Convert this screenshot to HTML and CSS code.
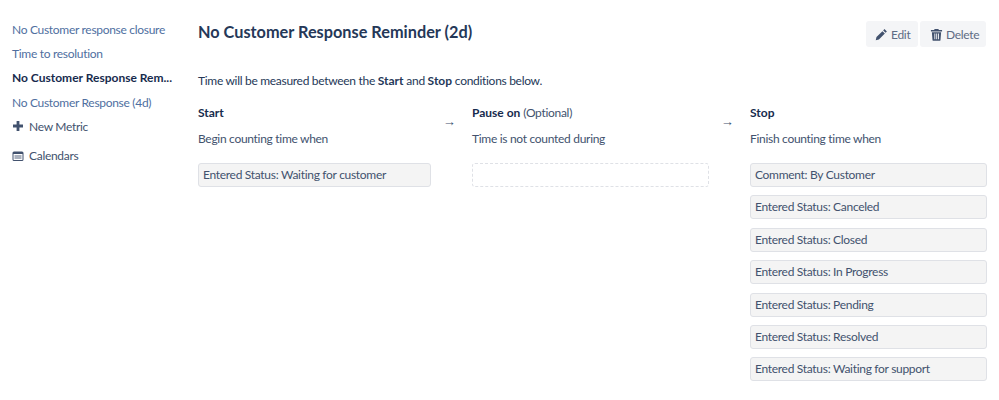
FILE: index.html
```html
<!DOCTYPE html>
<html lang="en">
<head>
<meta charset="utf-8">
<title>No Customer Response Reminder (2d)</title>
<link rel="stylesheet" href="styles.css">
</head>
<body>
<div class="page">
  <nav class="side">
    <a class="link">No Customer response closure</a>
    <a class="link">Time to resolution</a>
    <a class="link active">No Customer Response Rem...</a>
    <a class="link">No Customer Response (4d)</a>
    <a class="link action"><svg class="ico" viewBox="0 0 12 12"><path d="M4.600 1h2.800v3.600H11v2.800H7.400V11H4.600V7.400H1V4.600h3.600z"/></svg>New Metric</a>
    <a class="link action cal"><svg class="ico" viewBox="0 0 12 12"><path fill-rule="evenodd" d="M2 1.500h8A1.500 1.500 0 0 1 11.500 3v6.500A1.500 1.500 0 0 1 10 11H2A1.500 1.500 0 0 1 .5 9.500V3A1.500 1.500 0 0 1 2 1.500zM1.500 4v5.500a.5.5 0 0 0 .5.5h8a.5.5 0 0 0 .5-.5V4z"/><path opacity=".45" d="M2.500 5h7v4h-7z"/></svg>Calendars</a>
  </nav>
  <main class="main">
    <header class="head">
      <h1 class="title">No Customer Response Reminder (2d)</h1>
      <div class="btns">
        <button class="btn btn-edit"><svg class="bico" viewBox="0 0 14 14"><path d="M10.200 1.200l2.600 2.600-1.400 1.400-2.600-2.600zM8 3.400L10.600 6l-6.400 6.400-3.400.8.800-3.400z"/></svg>Edit</button>
        <button class="btn btn-del"><svg class="bico" viewBox="0 0 14 14"><path fill-rule="evenodd" d="M5 1h4l.6 1.200H13v1.500H1V2.200h3.400zM2 4.500h10l-.7 8.300a1 1 0 0 1-1 .9H3.700a1 1 0 0 1-1-.9zM4.700 6v6h1V6zm2 0v6h1V6zm2 0v6h1V6z"/></svg>Delete</button>
      </div>
    </header>
    <p class="intro">Time will be measured between the <b>Start</b> and <b>Stop</b> conditions below.</p>
    <div class="cols">
      <section class="col c1">
        <h2 class="ch">Start</h2>
        <p class="sub">Begin counting time when</p>
        <div class="item">Entered Status: Waiting for customer</div>
      </section>
      <div class="arrow">→</div>
      <section class="col c2">
        <h2 class="ch">Pause on <span class="opt">(Optional)</span></h2>
        <p class="sub">Time is not counted during</p>
        <div class="empty"></div>
      </section>
      <div class="arrow">→</div>
      <section class="col c3">
        <h2 class="ch">Stop</h2>
        <p class="sub">Finish counting time when</p>
        <div class="item">Comment: By Customer</div>
        <div class="item">Entered Status: Canceled</div>
        <div class="item">Entered Status: Closed</div>
        <div class="item">Entered Status: In Progress</div>
        <div class="item">Entered Status: Pending</div>
        <div class="item">Entered Status: Resolved</div>
        <div class="item">Entered Status: Waiting for support</div>
      </section>
    </div>
  </main>
</div>
</body>
</html>
```

FILE: styles.css
```css
* { box-sizing: border-box; }
html, body { margin: 0; background: #fff; }
body { font-family: Lato, "Open Sans", sans-serif; font-size: 12px; letter-spacing: -0.300px; color: #172b4d; height: 400px; overflow: hidden; }
b { letter-spacing: 0; }
.page { display: flex; padding-top: 17px; }
.side { flex: none; width: 198px; padding-left: 12px; display: flex; flex-direction: column; }
.link { display: flex; align-items: center; height: 24.300px; color: #4f6f9f; white-space: nowrap; }
.active { color: #172b4d; font-weight: 700; letter-spacing: 0; }
.action { color: #42526e; }
.cal { margin-top: 5px; }
.ico { width: 12px; height: 12px; margin-right: 5px; fill: #42526e; flex: none; }
.main { flex: none; width: 789px; padding-top: 1px; }
.head { display: flex; justify-content: space-between; align-items: flex-start; height: 54px; padding-right: 1px; }
.title { margin: 2px 0 0; font-size: 16.300px; font-weight: 700; letter-spacing: 0; line-height: 24px; color: #253858; }
.btns { display: flex; gap: 2px; margin-top: 3px; }
.btn { display: flex; align-items: center; height: 26px; border: 0; border-radius: 3px; background: #f4f5f7; color: #5e6c84; font: inherit; letter-spacing: inherit; }
.btn-edit { width: 52px; padding: 0 0 0 9px; }
.btn-del { width: 66px; padding: 0 0 0 10px; }
.bico { width: 13px; height: 13px; margin-right: 3px; fill: #42526e; }
.intro { margin: 0; line-height: 18px; height: 33px; color: #253858; }
.cols { display: flex; }
.col { flex: none; display: flex; flex-direction: column; }
.c1 { width: 233px; }
.c2 { width: 237px; }
.c3 { width: 237px; }
.arrow { flex: none; width: 41px; text-align: center; padding: 3px 5px 0 0; font-family: "Liberation Sans", sans-serif; font-size: 13px; line-height: 28px; color: #42526e; }
.ch { margin: -1px 0 0; font-size: 12px; font-weight: 700; letter-spacing: 0; line-height: 18px; height: 26px; color: #172b4d; }
.opt { font-weight: 400; letter-spacing: -0.300px; color: #42526e; }
.sub { margin: 0; line-height: 18px; height: 33px; color: #42526e; }
.item { display: flex; align-items: center; height: 24px; margin-bottom: 8.400px; padding: 0 4px 1px; background: #f4f4f4; border: 1px solid #dfe1e6; border-radius: 3px; color: #42526e; white-space: nowrap; }
.empty { height: 24px; border: 1px dashed #dfe1e6; border-radius: 3px; }
```
